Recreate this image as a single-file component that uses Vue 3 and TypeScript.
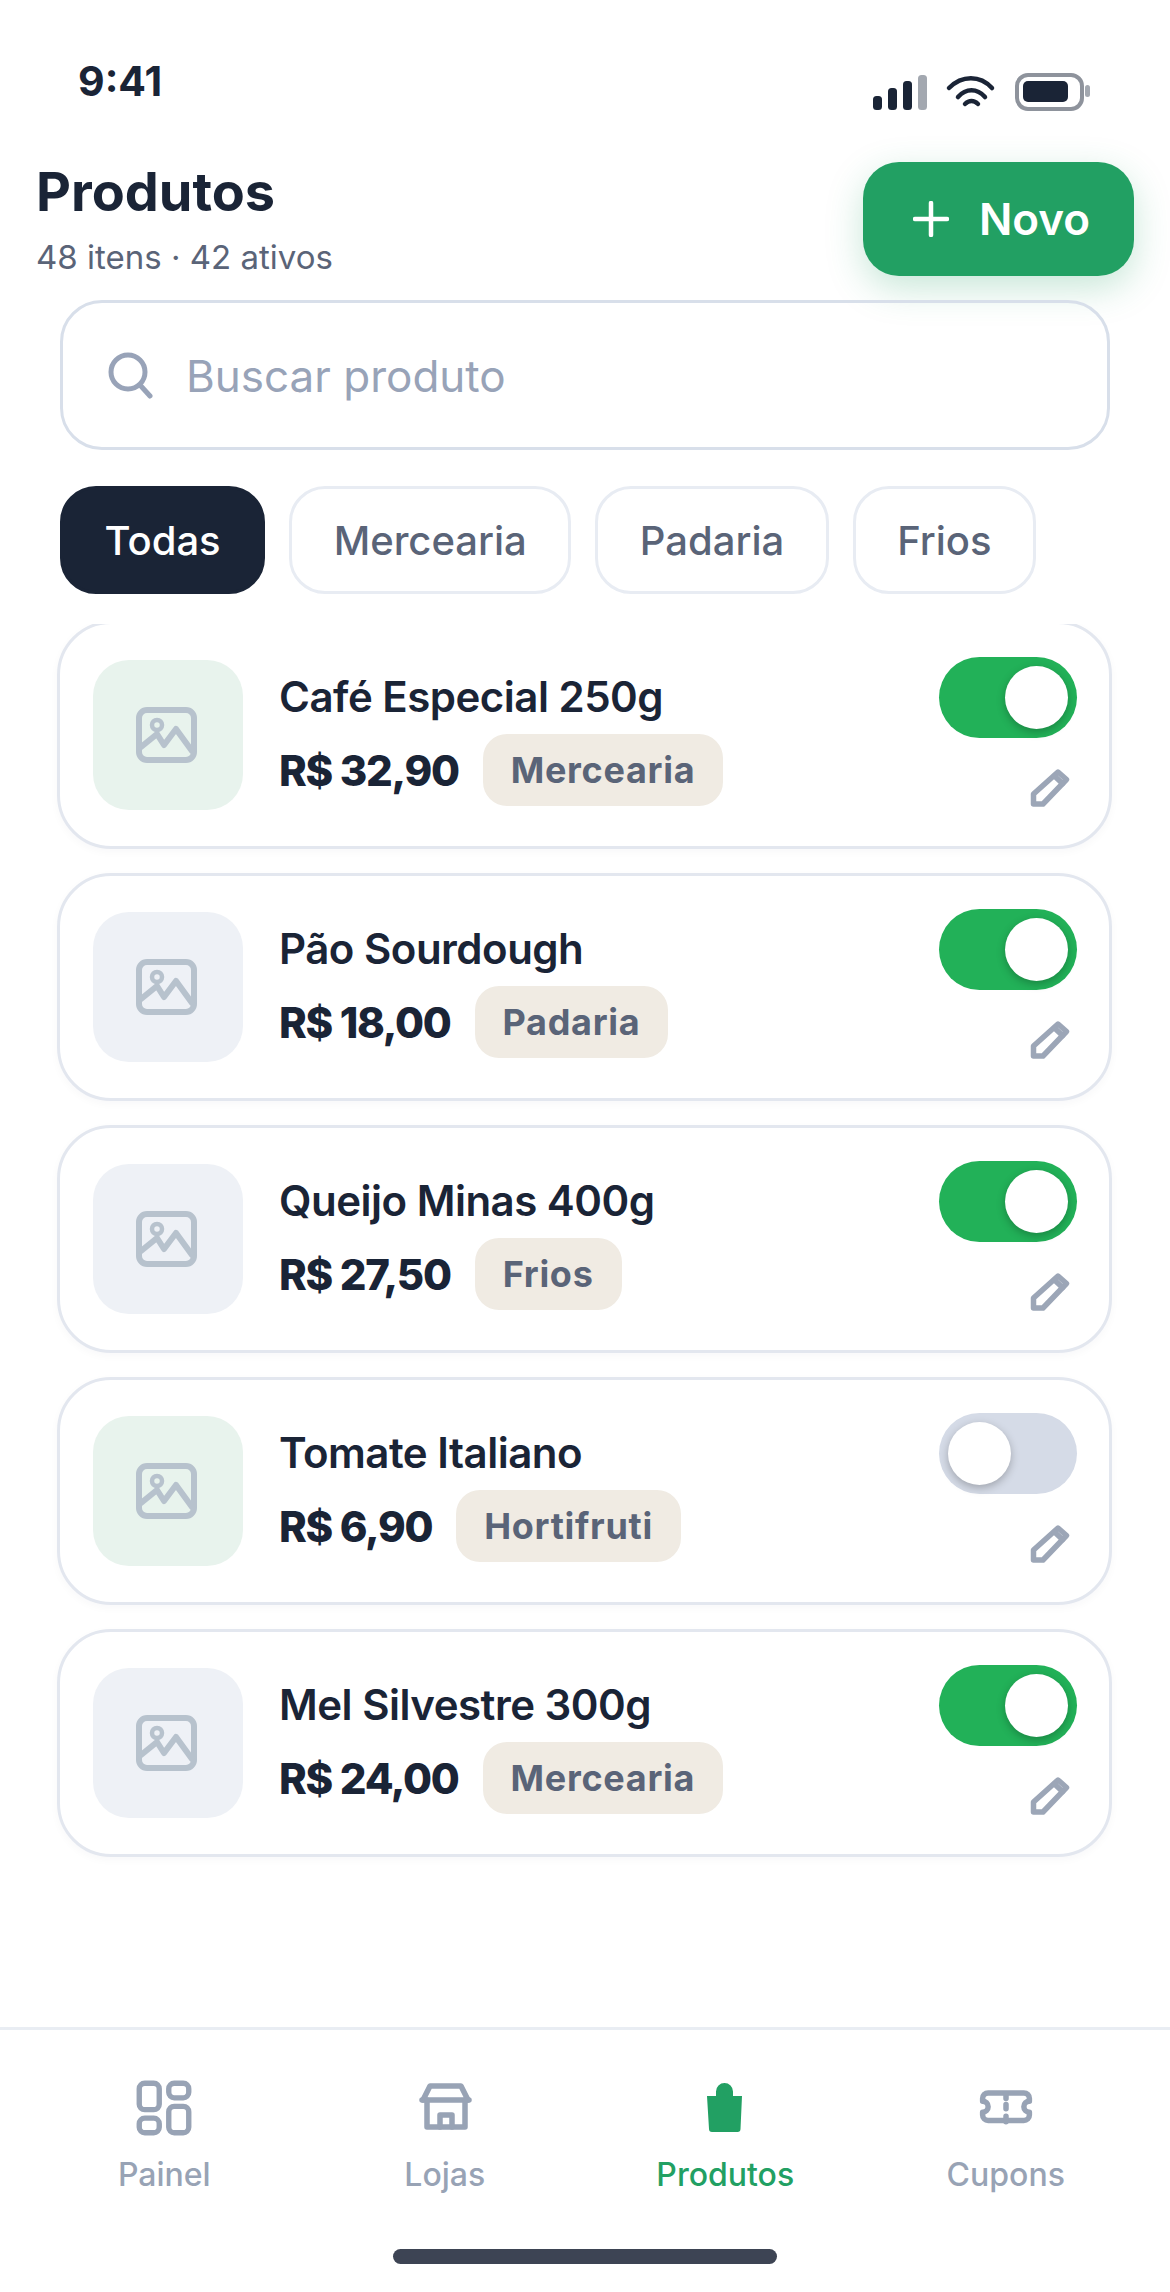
<script setup lang="ts">
type Product = { name: string; price: string; category: string; green: boolean; active: boolean }

const chips = ['Todas', 'Mercearia', 'Padaria', 'Frios']

const products: Product[] = [
  { name: 'Café Especial 250g', price: 'R$ 32,90', category: 'Mercearia', green: true, active: true },
  { name: 'Pão Sourdough', price: 'R$ 18,00', category: 'Padaria', green: false, active: true },
  { name: 'Queijo Minas 400g', price: 'R$ 27,50', category: 'Frios', green: false, active: true },
  { name: 'Tomate Italiano', price: 'R$ 6,90', category: 'Hortifruti', green: true, active: false },
  { name: 'Mel Silvestre 300g', price: 'R$ 24,00', category: 'Mercearia', green: false, active: true },
]
</script>

<template>
  <div class="page">
    <div class="status">
      <span class="time">9:41</span>
      <svg class="status-icons" width="222" height="42" viewBox="0 0 222 42" fill="none">
        <rect x="3" y="26" width="9" height="14" rx="3.5" fill="#1a2436" />
        <rect x="18" y="18" width="9" height="22" rx="3.5" fill="#1a2436" />
        <rect x="33" y="11" width="9" height="29" rx="3.5" fill="#1a2436" />
        <rect x="48" y="5" width="9" height="35" rx="3.5" fill="#a3a8b0" />
        <path d="M79 18C92 5 110 5 122 18M88 27C96 18 107 18 115 27M95 34C99 30 104 30 108 34" stroke="#1a2436" stroke-width="4.5" stroke-linecap="round" />
        <rect x="147" y="5" width="65" height="34" rx="11" stroke="#8e939c" stroke-width="4" />
        <rect x="153" y="11" width="45" height="21" rx="5" fill="#1a2436" />
        <rect x="215" y="15" width="5" height="12" rx="2.5" fill="#a3a8b0" />
      </svg>
    </div>

    <header class="header">
      <div>
        <h1 class="title">Produtos</h1>
        <p class="subtitle">48 itens · 42 ativos</p>
      </div>
      <button class="new-btn">
        <svg width="36" height="36" viewBox="0 0 36 36" fill="none">
          <path d="M18 2V34M2 18H34" stroke="#fff" stroke-width="4.5" stroke-linecap="round" />
        </svg>
        Novo
      </button>
    </header>

    <div class="search">
      <svg width="46" height="48" viewBox="0 0 46 48" fill="none">
        <circle cx="20" cy="21" r="17" stroke="#98a3b8" stroke-width="5" />
        <path d="M32 34L42 45" stroke="#98a3b8" stroke-width="5" stroke-linecap="round" />
      </svg>
      <span>Buscar produto</span>
    </div>

    <div class="chips">
      <div v-for="(chip, i) in chips" :key="chip" class="chip" :class="{ active: i === 0 }">{{ chip }}</div>
    </div>

    <div class="list">
      <div class="list-inner">
        <div v-for="p in products" :key="p.name" class="card">
          <div class="thumb" :class="{ green: p.green }">
            <svg width="66" height="66" viewBox="0 0 66 66" fill="none" stroke="#b7c2cd" stroke-width="6" stroke-linejoin="round" stroke-linecap="round">
              <rect x="4" y="8" width="55" height="50" rx="8" />
              <circle cx="22" cy="23" r="5" stroke-width="4.5" />
              <path d="M6 45L22 32L29 43L41 27L57 49" />
            </svg>
          </div>
          <div class="info">
            <div class="name">{{ p.name }}</div>
            <div class="price-row">
              <span class="price">{{ p.price }}</span>
              <span class="badge">{{ p.category }}</span>
            </div>
          </div>
          <div class="actions">
            <div class="toggle" :class="{ on: p.active }"><span class="knob"></span></div>
            <svg class="pencil" width="54" height="54" viewBox="0 0 54 54" fill="none" stroke="#9ca6b7" stroke-width="5.5" stroke-linejoin="round" stroke-linecap="round">
              <path d="M35 10L43.500 17.500L20 42H10.500V32Z" />
              <path d="M31.500 14L39.500 21.500" />
            </svg>
          </div>
        </div>
      </div>
    </div>

    <nav class="nav">
      <div class="nav-item">
        <svg width="66" height="66" viewBox="0 0 24 24" fill="none" stroke="#98a3b5" stroke-width="1.95">
          <rect x="3" y="3" width="7.270" height="9.600" rx="2" />
          <rect x="13.730" y="3" width="7.270" height="5.300" rx="2" />
          <rect x="13.730" y="11.400" width="7.270" height="9.600" rx="2" />
          <rect x="3" y="15.700" width="7.270" height="5.300" rx="2" />
        </svg>
        <span>Painel</span>
      </div>
      <div class="nav-item">
        <svg width="66" height="66" viewBox="0 0 66 66" fill="none" stroke="#98a3b5" stroke-width="5.5" stroke-linejoin="round" stroke-linecap="round">
          <path d="M11 25L18 11H49L56 25" />
          <path d="M10 25H57" />
          <path d="M15 25V52H53V25" />
          <path d="M28 52V40H40V52" />
        </svg>
        <span>Lojas</span>
      </div>
      <div class="nav-item current">
        <svg width="66" height="66" viewBox="0 0 66 66">
          <path d="M24 21V16.500a8.500 8.500 0 0 1 17 0V21H50L48.500 54a3 3 0 0 1-3 3H20a3 3 0 0 1-3-3L15 21Z" fill="#22a063" />
        </svg>
        <span>Produtos</span>
      </div>
      <div class="nav-item">
        <svg width="66" height="66" viewBox="0 0 24 24" fill="none" stroke="#98a3b5" stroke-width="2" stroke-linejoin="round" stroke-linecap="round">
          <path d="M3.500 9.500a2 2 0 0 1 0 4v1a2 2 0 0 0 2 2h13a2 2 0 0 0 2-2v-1a2 2 0 0 1 0-4v-1a2 2 0 0 0-2-2h-13a2 2 0 0 0-2 2Z" />
          <path d="M12 7v1.500M12 10.700v1.600M12 15v2" />
        </svg>
        <span>Cupons</span>
      </div>
    </nav>
    <div class="home-bar"></div>
  </div>
</template>

<style scoped>
.page {
  width: 1170px;
  height: 2292px;
  display: flex;
  flex-direction: column;
  background: #fff;
  font-family: Inter, "Liberation Sans", sans-serif;
  color: #1a2436;
  overflow: hidden;
}

.status {
  height: 162px;
  flex-shrink: 0;
  box-sizing: border-box;
  padding: 59px 78px 0;
  display: flex;
  justify-content: space-between;
  align-items: flex-start;
}

.time {
  font-size: 41px;
  line-height: 44px;
  font-weight: 700;
}

.status-icons {
  margin-top: 11px;
}

.header {
  height: 114px;
  flex-shrink: 0;
  padding: 0 36px;
  display: flex;
  justify-content: space-between;
}

.title {
  margin: 0;
  font-size: 54px;
  line-height: 60px;
  font-weight: 700;
}

.subtitle {
  margin: 13px 0 0;
  font-size: 33px;
  line-height: 44px;
  color: #5a6478;
}

.new-btn {
  width: 271px;
  height: 114px;
  border: 0;
  border-radius: 36px;
  padding: 0 0 0 6px;
  background: #22a063;
  color: #fff;
  font-family: inherit;
  font-size: 44px;
  font-weight: 600;
  display: flex;
  align-items: center;
  justify-content: center;
  gap: 30px;
  box-shadow: 0 12px 36px rgba(34, 160, 99, 0.25);
}

.search {
  margin: 24px 60px 0;
  height: 150px;
  flex-shrink: 0;
  box-sizing: border-box;
  border: 3px solid #d8dfea;
  border-radius: 42px;
  padding: 0 45px;
  display: flex;
  align-items: center;
  gap: 32px;
  font-size: 44px;
  color: #98a3b8;
}

.search span {
  position: relative;
  top: 1px;
}

.chips {
  margin: 36px 60px 0;
  display: flex;
  gap: 24px;
  flex-shrink: 0;
}

.chip {
  height: 108px;
  box-sizing: border-box;
  padding: 0 41.500px;
  border: 3px solid #e8ecf3;
  border-radius: 36px;
  display: flex;
  align-items: center;
  font-size: 40px;
  font-weight: 500;
  color: #5a6478;
}

.chip.active {
  background: #1a2436;
  border-color: #1a2436;
  color: #fff;
}

.list {
  margin: 30px 48px 0 47px;
  padding: 0 10px 12px;
  overflow: hidden;
}

.list-inner {
  margin-top: -3px;
  display: flex;
  flex-direction: column;
  gap: 24px;
}

.card {
  height: 228px;
  box-sizing: border-box;
  border: 3px solid #e3e7ef;
  border-radius: 54px;
  padding: 33px 32px 33px 33px;
  display: flex;
  align-items: center;
  gap: 36px;
  background: #fff;
  box-shadow: 0 3px 9px rgba(26, 36, 54, 0.03);
}

.thumb {
  width: 150px;
  height: 150px;
  flex-shrink: 0;
  border-radius: 36px;
  background: #eef1f6;
  display: flex;
  align-items: center;
  justify-content: center;
}

.thumb.green {
  background: #e8f3ed;
}

.info {
  flex: 1;
  min-width: 0;
}

.name {
  font-size: 42px;
  line-height: 66px;
  font-weight: 600;
  letter-spacing: -0.5px;
}

.price-row {
  margin-top: 4px;
  display: flex;
  align-items: center;
  gap: 24px;
}

.price {
  font-size: 42px;
  font-weight: 800;
  letter-spacing: -1.300px;
}

.badge {
  height: 72px;
  padding: 0 28px;
  border-radius: 24px;
  background: #f0ebe3;
  color: #5a6478;
  display: flex;
  align-items: center;
  font-size: 36px;
  font-weight: 700;
  letter-spacing: 0.7px;
}

.actions {
  align-self: flex-start;
  display: flex;
  flex-direction: column;
  align-items: flex-end;
  gap: 24px;
}

.toggle {
  width: 138px;
  height: 81px;
  border-radius: 42px;
  background: #d5dbe7;
  display: flex;
  align-items: center;
  padding: 0 9px;
  box-sizing: border-box;
}

.toggle.on {
  background: #22b158;
  justify-content: flex-end;
}

.knob {
  width: 63px;
  height: 63px;
  border-radius: 50%;
  background: #fff;
  box-shadow: 0 3px 9px rgba(0, 0, 0, 0.25);
}

.pencil {
  display: block;
}

.nav {
  margin-top: auto;
  height: 166px;
  box-sizing: border-box;
  flex-shrink: 0;
  border-top: 3px solid #e9edf3;
  padding: 45px 24px 0;
  display: grid;
  grid-template-columns: repeat(4, 1fr);
}

.nav-item {
  display: flex;
  flex-direction: column;
  align-items: center;
  gap: 14px;
  font-size: 32px;
  line-height: 40px;
  font-weight: 500;
  color: #98a3b5;
}

.nav-item svg {
  display: block;
}

.nav-item.current {
  color: #22a063;
}

.home-bar {
  width: 384px;
  height: 15px;
  flex-shrink: 0;
  margin: 56px auto 28px;
  border-radius: 9px;
  background: #3d4454;
}
</style>

<style>
html,
body {
  margin: 0;
  background: #fff;
}
</style>
